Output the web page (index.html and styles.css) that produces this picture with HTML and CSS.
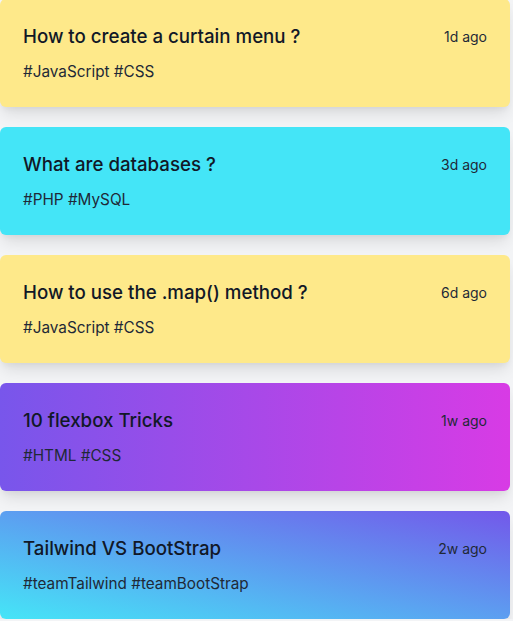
FILE: index.html
```html
<!DOCTYPE html>
<html lang="en">
<head>
<meta charset="utf-8">
<title>Posts</title>
<link rel="stylesheet" href="styles.css">
</head>
<body>
<main class="list">
  <article class="card yellow">
    <div class="head"><h2 class="title">How to create a curtain menu ?</h2><span class="time">1d ago</span></div>
    <p class="tags">#JavaScript #CSS</p>
  </article>
  <article class="card cyan">
    <div class="head"><h2 class="title">What are databases ?</h2><span class="time">3d ago</span></div>
    <p class="tags">#PHP #MySQL</p>
  </article>
  <article class="card yellow">
    <div class="head"><h2 class="title">How to use the .map() method ?</h2><span class="time">6d ago</span></div>
    <p class="tags">#JavaScript #CSS</p>
  </article>
  <article class="card purple">
    <div class="head"><h2 class="title">10 flexbox Tricks</h2><span class="time">1w ago</span></div>
    <p class="tags">#HTML #CSS</p>
  </article>
  <article class="card blue">
    <div class="head"><h2 class="title">Tailwind VS BootStrap</h2><span class="time">2w ago</span></div>
    <p class="tags">#teamTailwind #teamBootStrap</p>
  </article>
</main>
</body>
</html>
```
FILE: styles.css
```css
* { box-sizing: border-box; }
html, body { margin: 0; padding: 0; }
body {
  background: #f3f4f6;
  font-family: Inter, "Noto Sans", sans-serif;
  color: #1f2937;
  overflow: hidden;
}
.list {
  display: flex;
  flex-direction: column;
  gap: 20px;
  width: 510px;
  margin-top: -1px;
}
.card {
  height: 108px;
  padding: 24px 23px 24px 23px;
  border-radius: 6px;
  box-shadow: 0 10px 15px -3px rgba(0,0,0,0.1), 0 4px 6px -2px rgba(0,0,0,0.05);
}
.head {
  display: flex;
  justify-content: space-between;
  align-items: center;
}
.title {
  margin: 0;
  font-size: 18.7px;
  line-height: 28px;
  font-weight: 500;
  color: #111827;
}
.time {
  font-size: 14px;
  line-height: 20px;
  color: #1f2937;
}
.tags {
  margin: 9px 0 0;
  font-size: 15.3px;
  line-height: 24px;
  color: #1f2937;
}
.yellow { background: #fee98a; }
.cyan { background: #44e5f7; }
.purple { background: linear-gradient(to right, #7856eb, #d83be5); }
.blue { background: linear-gradient(to top right, #45e5f7, #7358ea); }
```
